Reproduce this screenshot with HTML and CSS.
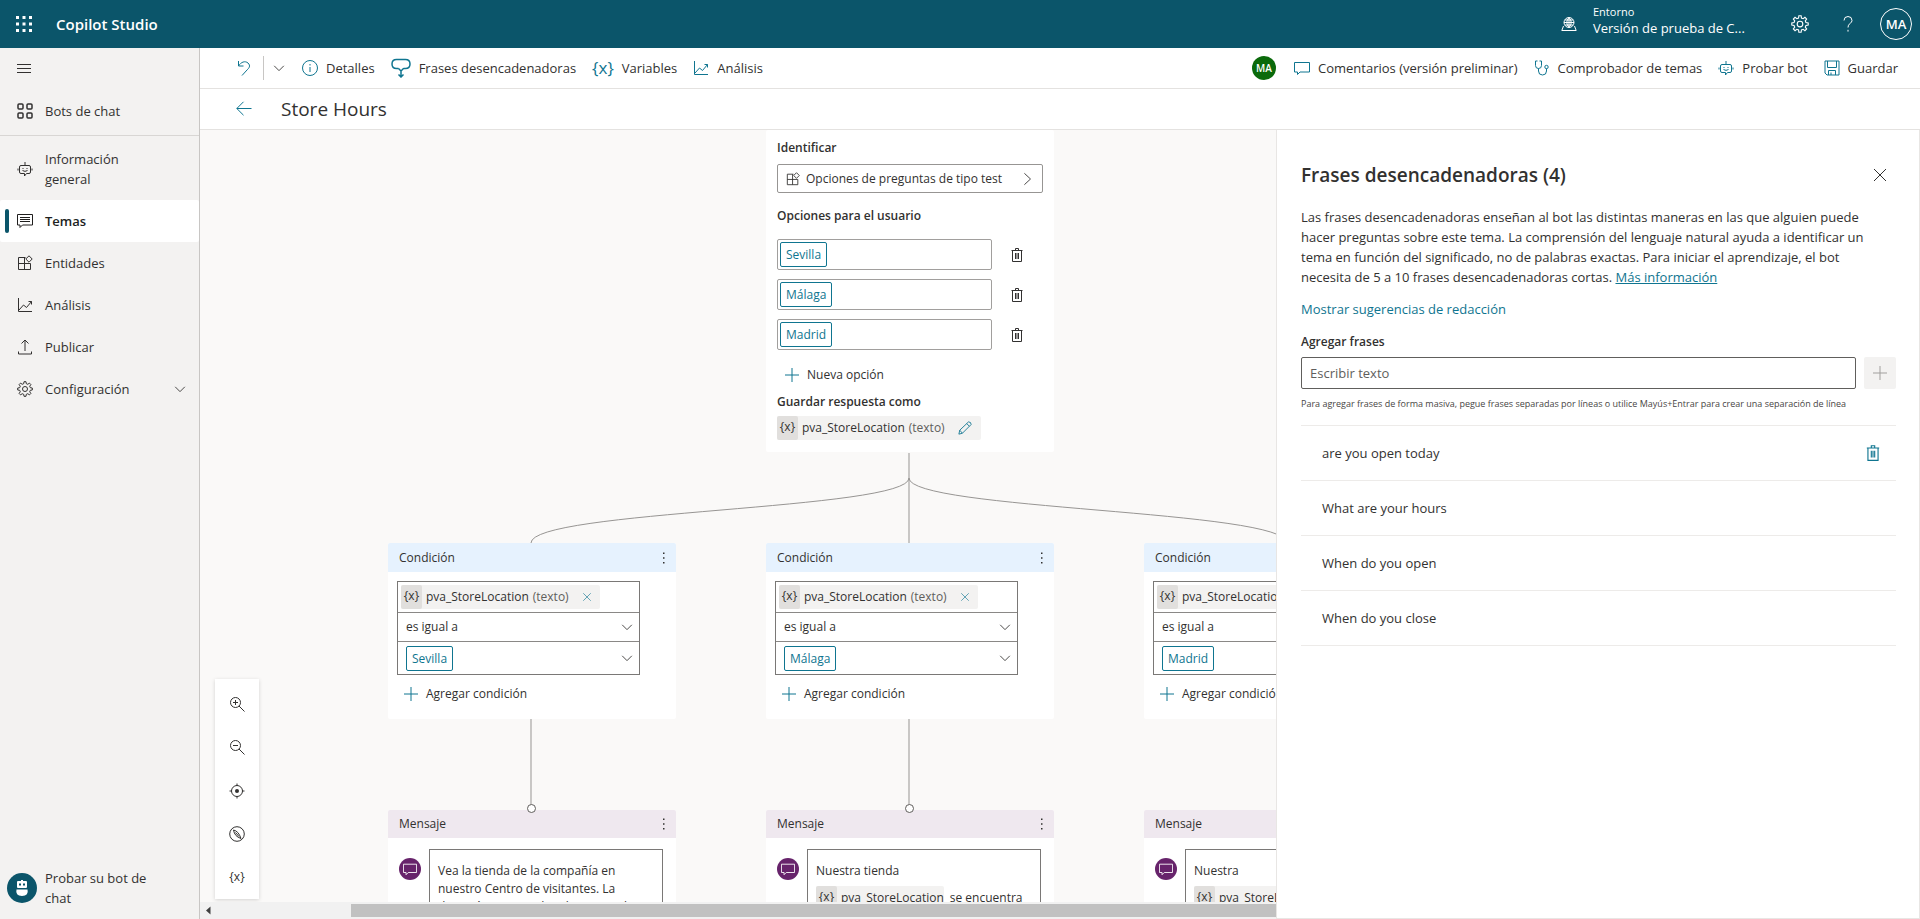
FILE: index.html
```html
<!DOCTYPE html>
<html lang="es">
<head>
<meta charset="utf-8">
<title>Copilot Studio</title>
<link rel="stylesheet" href="styles.css">
</head>
<body>
<svg class="sprite" aria-hidden="true">
  <symbol id="chart" viewBox="0 0 16 16"><path d="M1.500 1v13.500H15M2 13l4.500-5 3 2.500L14.500 4.500M11.500 4.500h3v3"/></symbol>
  <symbol id="chev" viewBox="0 0 16 16"><path d="M2.500 5.500L8 11l5.500-5.500"/></symbol>
  <symbol id="right" viewBox="0 0 16 16"><path d="M5 1.500L12 8l-7 6.500"/></symbol>
  <symbol id="bot" viewBox="0 0 16 16"><path d="M8 1v3M4 4.500h8q1.500 0 1.500 1.500v5q0 1.500-1.500 1.500H9.500L7.500 15v-2.500H4q-1.500 0-1.500-1.500V6q0-1.500 1.500-1.500zM1 7.500v2M15 7.500v2M5.500 7.500h1M9.500 7.500h1M5.500 9.500q2.500 1.800 5 0"/></symbol>
  <symbol id="grid" viewBox="0 0 16 16"><path d="M8.500 2.500h-7v12h12v-6M1.500 8.500h12M7.500 2.500v12M12 .8L15.200 4 12 7.200 8.800 4z"/></symbol>
  <symbol id="gear" viewBox="0 0 16 16"><path d="M6.700 2.700L7 .7h2l.3 2 1.500.6 1.600-1.200 1.500 1.500-1.200 1.600.6 1.500 2 .3v2l-2 .3-.6 1.500 1.200 1.600-1.500 1.500-1.600-1.200-1.500.6-.3 2H7l-.3-2-1.500-.6-1.600 1.200-1.500-1.500 1.200-1.600-.6-1.500-2-.3V7l2-.3.6-1.500-1.200-1.600 1.500-1.500 1.600 1.200z"/><circle cx="8" cy="8" r="2.500"/></symbol>
  <symbol id="comment" viewBox="0 0 16 16"><path d="M.5 2.500h15v9.500H6L3.500 14.500V12h-3z"/></symbol>
  <symbol id="trash" viewBox="0 0 16 16"><path d="M2.500 3.500h11M3.500 3.500v11h9v-11M6.500 3.500v-2h3v2M6.500 6v6M8 6v6M9.500 6v6"/></symbol>
  <symbol id="plus" viewBox="0 0 16 16"><path d="M8 1v14M1 8h14"/></symbol>
  <symbol id="cross" viewBox="0 0 16 16"><path d="M2 2l12 12M14 2L2 14"/></symbol>
  <symbol id="dots" viewBox="0 0 16 16"><path class="solid" d="M7 2.500h1.500V4H7zM7 7.200h1.500v1.500H7zM7 12h1.500v1.500H7z"/></symbol>
</svg>

<header class="topbar">
  <button class="icon-btn" aria-label="Iniciador de aplicaciones"><svg class="i16 fill" viewBox="0 0 16 16"><path d="M0 0h3v3H0zM6.500 0h3v3h-3zM13 0h3v3h-3zM0 6.500h3v3H0zM6.500 6.500h3v3h-3zM13 6.500h3v3h-3zM0 13h3v3H0zM6.500 13h3v3h-3zM13 13h3v3h-3z"/></svg></button>
  <h1 class="brand">Copilot Studio</h1>
  <button class="env">
    <svg class="i16" viewBox="0 0 16 16"><circle cx="8" cy="6.500" r="5"/><path d="M3 6.500h10M8 1.500v10M8 1.500q-4.500 5 0 10M8 1.500q4.500 5 0 10M4 4h8M4 9h8M2.500 10L.8 14.500h14.400L13.500 10"/></svg>
    <span class="env-text"><span class="env-label">Entorno</span><span>Versión de prueba de C...</span></span>
  </button>
  <button class="icon-btn" aria-label="Ajustes"><svg class="i18"><use href="#gear"/></svg></button>
  <button class="icon-btn" aria-label="Ayuda"><svg class="i16" viewBox="0 0 16 16"><path d="M4 4.500Q4 .5 8 .5t4 4q0 1.500-2 3T8 11.500M8 13.800v1.800"/></svg></button>
  <button class="avatar" aria-label="Cuenta">MA</button>
</header>

<div class="shell">
  <nav class="sidebar">
    <button class="menu-btn" aria-label="Contraer menú"><svg class="i16" viewBox="0 0 16 16"><path d="M1 4.500h14M1 8.500h14M1 12.500h14"/></svg></button>
    <a class="nav first" href="#"><svg class="i16 bold" viewBox="0 0 16 16"><rect x="1" y="1" width="5" height="5" rx="1"/><rect x="10" y="1" width="5" height="5" rx="1"/><rect x="1" y="10" width="5" height="5" rx="1"/><rect x="10" y="10" width="5" height="5" rx="1"/></svg><span>Bots de chat</span></a>
    <a class="nav tall" href="#"><svg class="i16"><use href="#bot"/></svg><span>Información<br>general</span></a>
    <a class="nav active" href="#"><svg class="i16" viewBox="0 0 16 16"><path d="M.5 1.500h15v10.500H5.500L3 14.500V12H.5zM3 4.500h10M3 6.500h10M3 8.500h10"/></svg><span>Temas</span></a>
    <a class="nav" href="#"><svg class="i16"><use href="#grid"/></svg><span>Entidades</span></a>
    <a class="nav" href="#"><svg class="i16"><use href="#chart"/></svg><span>Análisis</span></a>
    <a class="nav" href="#"><svg class="i16" viewBox="0 0 16 16"><path d="M1.500 12.500v2.500h13v-2.500M8 12V1M4.500 4.500L8 1l3.500 3.500"/></svg><span>Publicar</span></a>
    <a class="nav" href="#"><svg class="i16"><use href="#gear"/></svg><span>Configuración</span><svg class="i14 end"><use href="#chev"/></svg></a>
    <a class="try" href="#"><svg class="i30" viewBox="0 0 30 30"><circle class="teal" cx="15" cy="15" r="15"/><path class="white" d="M11 8h3V7h2v1h3q1 0 1 1v5q0 1-1 1h-8q-1 0-1-1V9q0-1 1-1zM9.500 16.500h11q1.500 6-5.500 6.500-7-.5-5.500-6.500z"/><path class="teal" d="M12 10.500h2v2h-2zM16 10.500h2v2h-2z"/></svg><span>Probar su bot de chat</span></a>
  </nav>

  <main class="main">
    <div class="commands">
      <button class="cmd undo" aria-label="Deshacer"><svg class="i16 b" viewBox="0 0 16 16"><path d="M2.500 1v5h5M2.500 6C5 2 9 .5 12 3c3 3 1 5-1 7L6 15.500"/></svg></button>
      <button class="cmd more" aria-label="Más opciones de deshacer"><svg class="i14"><use href="#chev"/></svg></button>
      <button class="cmd"><svg class="i16 b" viewBox="0 0 16 16"><circle cx="8" cy="8" r="7.500"/><path d="M8 7v5M8 4v1.500"/></svg>Detalles</button>
      <button class="cmd"><svg class="i20 b bold" viewBox="0 0 20 20"><path d="M7.500 10.500H5.500Q1 10.500 1 6t4.500-4.500h9Q19 1.500 19 6t-4.500 4.500h-2M7.500 10.500L10 13l2.500-2.500M10 13v6M7.500 16.500L10 19l2.500-2.500"/></svg>Frases desencadenadoras</button>
      <button class="cmd"><span class="brace">{x}</span>Variables</button>
      <button class="cmd"><svg class="i16 b"><use href="#chart"/></svg>Análisis</button>
      <span class="presence">MA</span>
      <button class="cmd"><svg class="i16 b"><use href="#comment"/></svg>Comentarios (versión preliminar)</button>
      <button class="cmd"><svg class="i16 b" viewBox="0 0 16 16"><path d="M3.500 1H1.500v4.500q0 3 3 3t3-3V1h-2M4.500 8.500V11q0 4 4 4t4-4V8.500"/><circle cx="12.500" cy="7" r="1.700"/></svg>Comprobador de temas</button>
      <button class="cmd"><svg class="i16 b"><use href="#bot"/></svg>Probar bot</button>
      <button class="cmd"><svg class="i16 b" viewBox="0 0 16 16"><path d="M1 1h14v14H3l-2-2zM3.500 1v6.500h9V1M4.500 15v-4.500h7V15M7 12.500V15"/></svg>Guardar</button>
    </div>
    <div class="titlebar">
      <button class="back" aria-label="Atrás"><svg class="i16 b" viewBox="0 0 16 16"><path d="M15.500 7.500H.8M7.500 .8L.8 7.500l6.700 6.700"/></svg></button>
      <h2 class="topic">Store Hours</h2>
    </div>
    <div class="work">
      <section class="canvas">
        <svg class="wires" width="1500" height="790" viewBox="0 0 1500 790">
          <path d="M709 323v25M709 348C709 380 331 380 331 413M709 348v65M709 348C709 380 1087 380 1087 413"/>
          <path d="M331 589v86M709 589v86"/>
        </svg>
        <article class="node question">
          <h3>Identificar</h3>
          <button class="picker"><svg class="i14"><use href="#grid"/></svg><span>Opciones de preguntas de tipo test</span><svg class="i14"><use href="#right"/></svg></button>
          <h3>Opciones para el usuario</h3>
          <ul class="options">
            <li><div class="optbox"><span class="chip">Sevilla</span></div><button class="bare" aria-label="Eliminar Sevilla"><svg class="i16"><use href="#trash"/></svg></button></li>
            <li><div class="optbox"><span class="chip">Málaga</span></div><button class="bare" aria-label="Eliminar Málaga"><svg class="i16"><use href="#trash"/></svg></button></li>
            <li><div class="optbox"><span class="chip">Madrid</span></div><button class="bare" aria-label="Eliminar Madrid"><svg class="i16"><use href="#trash"/></svg></button></li>
          </ul>
          <button class="add"><svg class="i16 b"><use href="#plus"/></svg>Nueva opción</button>
          <h3>Guardar respuesta como</h3>
          <div class="var"><span class="x">{x}</span><span>pva_StoreLocation</span><span class="type">(texto)</span><button class="bare" aria-label="Editar variable"><svg class="i14 b" viewBox="0 0 16 16"><path d="M1 15l1-4.500L12 1q3 0 3 3L5 14zM2 10.500L5 14M10 3l3 3"/></svg></button></div>
        </article>

        <article class="node cond c1">
          <header>Condición<button class="bare" aria-label="Más"><svg class="i16"><use href="#dots"/></svg></button></header>
          <div class="expr">
            <div class="row"><div class="var"><span class="x">{x}</span><span>pva_StoreLocation</span><span class="type">(texto)</span><button class="bare" aria-label="Quitar"><svg class="i10 b"><use href="#cross"/></svg></button></div></div>
            <button class="row">es igual a<svg class="i14"><use href="#chev"/></svg></button>
            <button class="row"><span class="chip">Sevilla</span><svg class="i14"><use href="#chev"/></svg></button>
          </div>
          <button class="add"><svg class="i16 b"><use href="#plus"/></svg>Agregar condición</button>
        </article>
        <article class="node cond c2">
          <header>Condición<button class="bare" aria-label="Más"><svg class="i16"><use href="#dots"/></svg></button></header>
          <div class="expr">
            <div class="row"><div class="var"><span class="x">{x}</span><span>pva_StoreLocation</span><span class="type">(texto)</span><button class="bare" aria-label="Quitar"><svg class="i10 b"><use href="#cross"/></svg></button></div></div>
            <button class="row">es igual a<svg class="i14"><use href="#chev"/></svg></button>
            <button class="row"><span class="chip">Málaga</span><svg class="i14"><use href="#chev"/></svg></button>
          </div>
          <button class="add"><svg class="i16 b"><use href="#plus"/></svg>Agregar condición</button>
        </article>
        <article class="node cond c3">
          <header>Condición<button class="bare" aria-label="Más"><svg class="i16"><use href="#dots"/></svg></button></header>
          <div class="expr">
            <div class="row"><div class="var"><span class="x">{x}</span><span>pva_StoreLocation</span><span class="type">(texto)</span><button class="bare" aria-label="Quitar"><svg class="i10 b"><use href="#cross"/></svg></button></div></div>
            <button class="row">es igual a<svg class="i14"><use href="#chev"/></svg></button>
            <button class="row"><span class="chip">Madrid</span><svg class="i14"><use href="#chev"/></svg></button>
          </div>
          <button class="add"><svg class="i16 b"><use href="#plus"/></svg>Agregar condición</button>
        </article>

        <article class="node msg m1">
          <header>Mensaje<button class="bare" aria-label="Más"><svg class="i16"><use href="#dots"/></svg></button></header>
          <div class="body"><span class="badge"><svg class="i14"><use href="#comment"/></svg></span><div class="text">Vea la tienda de la compañía en<br>nuestro Centro de visitantes. La<br>dirección se considera la principal</div></div>
        </article>
        <article class="node msg m2">
          <header>Mensaje<button class="bare" aria-label="Más"><svg class="i16"><use href="#dots"/></svg></button></header>
          <div class="body"><span class="badge"><svg class="i14"><use href="#comment"/></svg></span><div class="text">Nuestra tienda<div class="inline"><span class="var"><span class="x">{x}</span><span>pva_StoreLocation</span></span>se encuentra</div></div></div>
        </article>
        <article class="node msg m3">
          <header>Mensaje<button class="bare" aria-label="Más"><svg class="i16"><use href="#dots"/></svg></button></header>
          <div class="body"><span class="badge"><svg class="i14"><use href="#comment"/></svg></span><div class="text">Nuestra<div class="inline"><span class="var"><span class="x">{x}</span><span>pva_StoreLocation</span></span></div></div></div>
        </article>
        <span class="port p1"></span><span class="port p2"></span>

        <div class="tools">
          <button class="bare" aria-label="Acercar"><svg class="i16" viewBox="0 0 16 16"><circle cx="6.500" cy="6.500" r="5"/><path d="M10 10l5.500 5.500M6.500 4v5M4 6.500h5"/></svg></button>
          <button class="bare" aria-label="Alejar"><svg class="i16" viewBox="0 0 16 16"><circle cx="6.500" cy="6.500" r="5"/><path d="M10 10l5.500 5.500M4 6.500h5"/></svg></button>
          <button class="bare" aria-label="Centrar"><svg class="i16" viewBox="0 0 16 16"><circle cx="8" cy="8" r="5.500"/><circle class="solid" cx="8" cy="8" r="2"/><path d="M8 .5v2.500M8 13v2.500M.5 8h2.500M13 8h2.500"/></svg></button>
          <button class="bare" aria-label="Minimapa"><svg class="i16" viewBox="0 0 16 16"><circle cx="8" cy="8" r="7.300"/><path d="M4.500 4q5 1 7.500 8.500Q5.500 10.500 4.500 4zM6.500 6.500l3.500 4"/></svg></button>
          <button class="bare" aria-label="Variables">{x}</button>
        </div>
        <div class="scroll"><svg class="arrow" viewBox="0 0 17 17"><path d="M10.500 4.500v8L6 8.500z"/></svg><div class="thumb"></div></div>
      </section>

      <aside class="panel">
        <div class="panel-head"><h2>Frases desencadenadoras (4)</h2><button class="bare" aria-label="Cerrar"><svg class="i16"><use href="#cross"/></svg></button></div>
        <p class="intro">Las frases desencadenadoras enseñan al bot las distintas maneras en las que alguien puede<br>hacer preguntas sobre este tema. La comprensión del lenguaje natural ayuda a identificar un<br>tema en función del significado, no de palabras exactas. Para iniciar el aprendizaje, el bot<br>necesita de 5 a 10 frases desencadenadoras cortas. <a href="#">Más información</a></p>
        <button class="bare tips">Mostrar sugerencias de redacción</button>
        <label class="label" for="phrase">Agregar frases</label>
        <div class="entry"><input id="phrase" type="text" placeholder="Escribir texto"><button class="addbtn" aria-label="Agregar"><svg class="i16"><use href="#plus"/></svg></button></div>
        <p class="hint">Para agregar frases de forma masiva, pegue frases separadas por líneas o utilice Mayús+Entrar para crear una separación de línea</p>
        <ul class="phrases">
          <li>are you open today<button class="bare" aria-label="Eliminar frase"><svg class="i18 b"><use href="#trash"/></svg></button></li>
          <li>What are your hours</li>
          <li>When do you open</li>
          <li>When do you close</li>
        </ul>
      </aside>
    </div>
  </main>
</div>
</body>
</html>
```
FILE: styles.css
```css
* { box-sizing: border-box; }
body { margin: 0; height: 100vh; display: flex; flex-direction: column; overflow: hidden; font: 13px/20px "Open Sans", "Noto Sans", sans-serif; color: #323130; background: #fff; }
h1, h2, h3, p, ul { margin: 0; padding: 0; font-weight: 600; }
p, ul { font-weight: 400; }
ul { list-style: none; }
button, input { font: inherit; color: inherit; }
button { background: none; border: 0; padding: 0; margin: 0; text-align: left; }
a { color: inherit; text-decoration: none; }
svg { fill: none; stroke: currentColor; flex: none; display: block; }
.sprite { position: absolute; width: 0; height: 0; }
.solid { fill: currentColor; stroke: none; }
.fill { fill: currentColor; stroke: none; }
.bold { stroke-width: 1.5; }
.i10 { width: 10px; height: 10px; }
.i14 { width: 14px; height: 14px; }
.i16 { width: 16px; height: 16px; }
.i18 { width: 18px; height: 18px; }
.i20 { width: 20px; height: 20px; }
.i30 { width: 30px; height: 30px; stroke: none; }
.b { color: #0f7590; }
.teal { fill: #0b556a; }
.white { fill: #fff; }
.bare { display: flex; align-items: center; }

.topbar { flex: none; height: 48px; display: flex; align-items: center; background: #0b556a; color: #fff; padding-right: 8px; }
.icon-btn { width: 48px; height: 48px; display: flex; align-items: center; justify-content: center; }
.brand { flex: 1; padding-left: 8px; font-size: 15px; }
.env { display: flex; align-items: center; gap: 16px; width: 215px; }
.env-text { display: flex; flex-direction: column; line-height: 16px; padding-bottom: 8px; white-space: nowrap; }
.env-label { font-size: 11px; }
.avatar { width: 32px; height: 32px; margin-left: 8px; border: 1px solid #fff; border-radius: 50%; text-align: center; font-weight: 600; }

.shell { flex: 1; min-height: 0; display: flex; }
.sidebar { flex: none; width: 200px; display: flex; flex-direction: column; background: #f3f2f1; border-right: 1px solid #c8c6c4; }
.menu-btn { height: 40px; padding-left: 16px; }
.nav { display: flex; align-items: center; gap: 12px; height: 42px; padding: 0 12px 0 17px; }
.nav.first { height: 48px; padding-bottom: 2px; border-bottom: 1px solid #d8d6d4; }
.nav.tall { height: 64px; padding-top: 2px; }
.nav.active { position: relative; background: #fff; font-weight: 600; color: #201f1e; border-radius: 2px; }
.nav.active::before { content: ""; position: absolute; left: 5px; top: 9px; width: 4px; height: 24px; border-radius: 2px; background: #0b556a; }
.end { margin-left: auto; }
.try { display: flex; align-items: center; gap: 8px; margin-top: auto; padding: 0 40px 11px 7px; }

.main { flex: 1; min-width: 0; display: flex; flex-direction: column; }
.commands { flex: none; height: 41px; display: flex; align-items: center; gap: 16px; padding: 0 22px 0 36px; border-bottom: 1px solid #e4e2e0; white-space: nowrap; }
.cmd { display: flex; align-items: center; gap: 8px; }
.undo { height: 24px; padding-right: 11px; border-right: 1px solid #c8c6c4; }
.more { margin-left: -8px; }
.brace { font-size: 17px; color: #0f7590; }
.presence { margin: 0 2px 0 auto; width: 24px; height: 24px; border-radius: 50%; background: #0b6a0b; color: #fff; font-size: 10px; line-height: 24px; font-weight: 600; text-align: center; }
.titlebar { flex: none; height: 41px; display: flex; align-items: center; gap: 29px; padding-left: 36px; border-bottom: 1px solid #e4e2e0; }
.topic { font-size: 19px; font-weight: 400; }

.work { flex: 1; min-height: 0; display: flex; }
.canvas { flex: 1; min-width: 0; position: relative; overflow: hidden; background: #faf9f8; }
.wires { position: absolute; left: 0; top: 0; stroke: #979593; }
.node { position: absolute; width: 288px; background: #fff; border-radius: 2px; }
.question { left: 566px; top: 0; padding: 8px 11px 12px; }
.question h3 { font-size: 12px; }
.picker { display: flex; align-items: center; gap: 6px; width: 100%; height: 29px; margin: 6px 0 13px; padding: 0 8px; border: 1px solid #979593; border-radius: 2px; font-size: 12px; }
.picker span { flex: 1; }
.options { display: flex; flex-direction: column; gap: 9px; padding: 13px 0 15px; }
.options li { display: flex; gap: 17px; }
.optbox { width: 215px; height: 31px; padding: 2px; border: 1px solid #a19f9d; border-radius: 2px; display: flex; }
.chip { border: 1px solid #0f7590; border-radius: 2px; color: #0f7590; height: 25px; line-height: 23px; padding: 0 5px; font-size: 12px; }
.add { display: flex; align-items: center; gap: 7px; padding-left: 7px; }
.question .add { margin-bottom: 7px; font-size: 12px; }
.var { display: inline-flex; align-items: center; height: 24px; background: #f3f2f1; border-radius: 2px; font-size: 12px; }
.x { width: 21px; height: 24px; line-height: 22px; margin-right: 4px; text-align: center; background: #e1dfdd; border-radius: 2px; }
.type { color: #605e5c; padding: 0 13px 0 4px; }
.question .var { display: flex; width: 204px; margin-top: 4px; }

.node header { display: flex; align-items: center; justify-content: space-between; height: 29px; padding: 0 4px 0 11px; font-size: 12px; border-radius: 2px 2px 0 0; }
.cond { top: 413px; height: 176px; }
.cond header { background: #e6f2fe; }
.expr { width: 243px; margin: 9px 0 9px 9px; border: 1px solid #7a7876; }
.row { display: flex; align-items: center; justify-content: space-between; width: 100%; height: 29px; padding: 0 5px 0 8px; font-size: 12px; border-bottom: 1px solid #8a8886; }
.row:first-child { height: 31px; padding-left: 3px; }
.row:last-child { height: 32px; border-bottom: 0; }
.row .bare { padding-right: 8px; }
.cond .add { padding-left: 15px; font-size: 12px; }
.c1, .m1 { left: 188px; }
.c2, .m2 { left: 566px; }
.c3, .m3 { left: 944px; }
.msg { top: 680px; }
.msg header { height: 28px; background: #efe8ef; }
.body { display: flex; gap: 8px; padding: 11px 13px 0 11px; }
.badge { width: 22px; height: 22px; margin-top: 9px; border-radius: 50%; background: #67236b; color: #fff; display: grid; place-items: center; }
.text { flex: 1; height: 120px; padding: 12px 8px; border: 1px solid #7a7876; font-size: 12px; line-height: 18px; white-space: nowrap; }
.inline { display: flex; align-items: center; gap: 6px; margin-top: 6px; }
.port { position: absolute; top: 674px; width: 9px; height: 9px; border: 1px solid #605e5c; border-radius: 50%; background: #fff; }
.p1 { left: 327px; }
.p2 { left: 705px; }
.tools { position: absolute; left: 15px; bottom: 20px; width: 44px; height: 220px; padding: 3px 0 0; display: flex; flex-direction: column; background: #fff; box-shadow: 0 1px 4px rgba(0, 0, 0, .16); }
.tools .bare { flex: 1; justify-content: center; font-size: 12px; }
.scroll { position: absolute; left: 0; right: 0; bottom: 0; height: 17px; display: flex; background: #f1f1f1; }
.arrow { width: 17px; height: 17px; fill: #404040; stroke: none; }
.thumb { flex: 1; margin: 2px 0 2px 134px; background: #c1c1c1; }

.panel { flex: none; width: 644px; padding: 32px 23px 24px 24px; border: solid #e8e6e4; border-width: 0 1px 1px; background: #fff; }
.panel-head { display: flex; justify-content: space-between; padding-right: 8px; margin-bottom: 19px; }
.panel-head h2 { font-size: 19px; line-height: 26px; }
.intro { white-space: nowrap; }
.intro a { color: #0f7590; text-decoration: underline; }
.tips { color: #0f7590; margin: 12px 0 13px; }
.label { display: block; font-weight: 600; font-size: 12px; margin-bottom: 5px; }
.entry { display: flex; gap: 8px; }
.entry input { flex: 1; min-width: 0; height: 32px; padding: 0 8px; border: 1px solid #605e5c; border-radius: 2px; }
.entry input::placeholder { color: #605e5c; opacity: 1; }
.addbtn { width: 32px; height: 32px; display: grid; place-items: center; background: #f3f2f1; color: #a19f9d; border-radius: 2px; }
.hint { font-size: 9px; line-height: 14px; margin: 8px 0 14px; white-space: nowrap; color: #484644; }
.phrases { border-top: 1px solid #edebe9; }
.phrases li { display: flex; align-items: center; justify-content: space-between; height: 55px; padding: 0 14px 0 21px; border-bottom: 1px solid #edebe9; }
```
